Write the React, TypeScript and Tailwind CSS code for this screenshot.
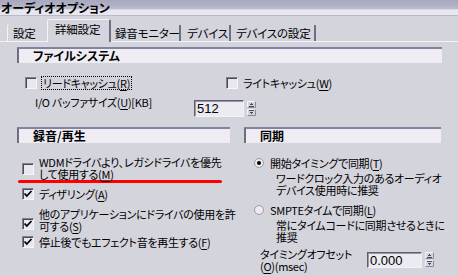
import React from 'react';

const jp = "font-['Noto_Sans_CJK_JP','Noto_Sans_CJK_SC',sans-serif] [font-feature-settings:'palt']";

const Mn = ({ c }: { c: string }) => (
  <>
    (<span className="underline underline-offset-2">{c}</span>)
  </>
);

const CheckBox = ({ checked = false }: { checked?: boolean }) => (
  <div className="w-[12px] h-[12px] shrink-0 border border-t-[#80808f] border-l-[#80808f] border-b-[#f6f5f9] border-r-[#f6f5f9] bg-[#e9e8ee] shadow-[inset_1px_1px_0_#4a4a58]">
    {checked && (
      <svg width="10" height="10" viewBox="0 0 10 10" className="block">
        <path d="M1.5 4.5 L3.8 7 L8.5 2" stroke="#000" strokeWidth="1.8" fill="none" />
      </svg>
    )}
  </div>
);

const Radio = ({ checked = false }: { checked?: boolean }) => (
  <div className="w-[10px] h-[10px] shrink-0 rounded-full border border-[#9a9aa9] bg-[#ebeaf0] flex items-center justify-center">
    {checked && <div className="w-[4px] h-[4px] rounded-full bg-black" />}
  </div>
);

const Spinner = () => (
  <svg width="9" height="15" viewBox="0 0 9 15" className="block shrink-0">
    <rect x="0" y="0" width="9" height="7" fill="#d4d4dc" />
    <rect x="0" y="8" width="9" height="7" fill="#d4d4dc" />
    <path d="M0.5 7 V0.5 H8.5 M0.5 15 V8.5 H8.5" stroke="#f4f4f8" fill="none" />
    <path d="M1 7 H9 V1 M1 15 H9 V9" stroke="#8a8a9a" fill="none" transform="translate(-0.5 -0.5)" />
    <path d="M4 2.5 h1 M3 3.5 h3 M2 5.5 h5" stroke="#4b4b5a" />
    <path d="M2 9.5 h5 M3 11.5 h3 M4 12.5 h1" stroke="#4b4b5a" />
  </svg>
);

const NumField = ({ value, w, h }: { value: string; w: string; h: string }) => (
  <div className={`${w} ${h} border border-t-[#5e5e70] border-l-[#5e5e70] border-b-[#f2f1f6] border-r-[#f2f1f6] bg-[#ecebf1] shadow-[inset_1px_1px_0_#9898a8] pl-[2px] flex items-center font-['Liberation_Sans',sans-serif] text-[13px] tracking-normal leading-none`}>
    {value}
  </div>
);

const SectionHead = ({ label, w }: { label: string; w: string }) => (
  <div className={`${w} h-[16px] border-t-2 border-l-2 border-t-[#8282a2] border-l-[#6e6e80] bg-[#efedf3] pl-[14px] text-[12px] font-bold leading-[14px] tracking-normal`}>
    {label}
  </div>
);

export default function App() {
  return (
    <div className={`w-[458px] h-[276px] overflow-hidden bg-[#d4d4dc] text-black whitespace-nowrap ${jp}`}>
      {/* title */}
      <div className="h-[16px] bg-[linear-gradient(to_bottom,#a8a8be_0%,#b0b0c5_30%,#bcbccf_55%,#e8e6ee_62%,#e8e6ee_92%,#9c9cb0_100%)] pl-[1px] text-[12px] font-bold leading-[16px]">
        オーディオオプション
      </div>

      {/* tabs */}
      <div className="flex items-end h-[26px] border-b border-[#f3f2f7] pl-[7px] text-[11.5px] leading-[14px] tracking-[-0.2px]">
        <div className="w-[40px] h-[17px] border-l border-[#f3f2f7] rounded-tl-[2px] pl-[5px] pt-[2px]">設定</div>
        <div className="w-[64px] h-[23px] -mb-px bg-[#d4d4dc] border-l border-t border-[#f3f2f7] border-r-2 border-r-[#6f6f84] rounded-t-[2px] pl-[7px] pt-[2px]">詳細設定</div>
        <div className="w-[70px] h-[16px] border-r-2 border-[#6f6f84] pl-[4px] pt-[1px]">録音モニター</div>
        <div className="w-[50px] h-[16px] border-r-2 border-[#6f6f84] pl-[6px] pt-[1px]">デバイス</div>
        <div className="w-[85px] h-[16px] border-r-2 border-[#6f6f84] pl-[5px] pt-[1px]">デバイスの設定</div>
      </div>

      {/* content */}
      <div className="text-[11px] tracking-[-0.3px]">
        <div className="mt-[5px] ml-[17px]">
          <SectionHead label="ファイルシステム" w="w-[425px]" />
        </div>

        <div className="mt-[13px] h-[14px] flex items-center">
          <div className="w-[201px] ml-[25px] flex items-center">
            <CheckBox />
            <div className="ml-[4px] px-[1px] h-[14px] border border-dotted border-black leading-[12px]">
              リードキャッシュ<Mn c="R" />
            </div>
          </div>
          <div className="flex items-center">
            <CheckBox />
            <div className="ml-[5px] leading-[12px]">
              ライトキャッシュ<Mn c="W" />
            </div>
          </div>
        </div>

        <div className="mt-[5px] h-[22px] flex items-start">
          <div className="ml-[35px] w-[159px] leading-[14px]">
            I/O バッファサイズ<Mn c="U" />[KB]
          </div>
          <div className="mt-[5px] flex items-start">
            <NumField value="512" w="w-[50px]" h="h-[17px]" />
            <div className="ml-[3px] mt-[1px]">
              <Spinner />
            </div>
          </div>
        </div>

        <div className="mt-[10px] flex">
          <div className="ml-[17px]">
            <SectionHead label="録音/再生" w="w-[213px]" />
          </div>
          <div className="ml-[14px]">
            <SectionHead label="同期" w="w-[197px]" />
          </div>
        </div>

        <div className="flex">
          {/* left column */}
          <div className="w-[227px] shrink-0 pl-[22px]">
            <div className="mt-[13px] flex items-start">
              <div className="mt-[7px]">
                <CheckBox />
              </div>
              <div className="ml-[5px] leading-[12px]">
                WDMドライバより、レガシドライバを優先
                <br />
                して使用する<Mn c="M" />
              </div>
            </div>
            <div className="-ml-[4px] w-[204px] h-[3px] rounded-full bg-[#ff0000]" />
            <div className="mt-[4px] flex items-center">
              <CheckBox checked />
              <div className="ml-[5px] leading-[12px] mt-[1px]">
                ディザリング<Mn c="A" />
              </div>
            </div>
            <div className="mt-[8px] flex items-start">
              <div className="mt-[10px]">
                <CheckBox checked />
              </div>
              <div className="ml-[5px] leading-[12px]">
                他のアプリケーションにドライバの使用を許
                <br />
                可する<Mn c="S" />
              </div>
            </div>
            <div className="mt-[4px] flex items-center">
              <CheckBox checked />
              <div className="ml-[5px] leading-[12px]">
                停止後でもエフェクト音を再生する<Mn c="F" />
              </div>
            </div>
          </div>

          {/* right column */}
          <div className="pl-[27px]">
            <div className="mt-[14px] flex items-center">
              <Radio checked />
              <div className="ml-[6px] leading-[12px]">
                開始タイミングで同期<Mn c="T" />
              </div>
            </div>
            <div className="ml-[22px] mt-[3px] leading-[12px]">
              ワードクロック入力のあるオーディオ
              <br />
              デバイス使用時に推奨
            </div>
            <div className="mt-[8px] flex items-center">
              <Radio />
              <div className="ml-[6px] leading-[12px]">
                SMPTEタイムで同期<Mn c="L" />
              </div>
            </div>
            <div className="ml-[22px] mt-[3px] leading-[12px]">
              常にタイムコードに同期させるときに
              <br />
              推奨
            </div>
            <div className="mt-[5px] flex items-start">
              <div className="ml-[6px] w-[107px] leading-[12px]">
                タイミングオフセット
                <br />
                <Mn c="O" />(msec)
              </div>
              <div className="mt-[4px] flex items-start">
                <NumField value="0.000" w="w-[55px]" h="h-[16px]" />
                <div className="ml-[3px]">
                  <Spinner />
                </div>
              </div>
            </div>
          </div>
        </div>
      </div>
    </div>
  );
}
